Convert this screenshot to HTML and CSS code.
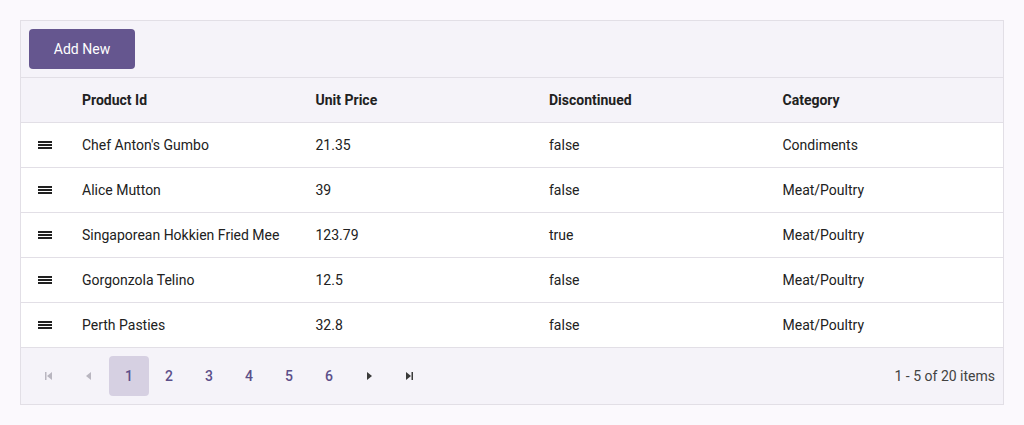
FILE: index.html
```html
<!DOCTYPE html>
<html>
<head>
<meta charset="utf-8">
<link rel="stylesheet" href="styles.css">
</head>
<body>
<div class="grid">
  <div class="toolbar"><button class="btn-add">Add New</button></div>
  <table class="tbl">
    <colgroup><col class="c-drag"><col><col><col><col></colgroup>
    <thead>
      <tr><th></th><th>Product Id</th><th>Unit Price</th><th>Discontinued</th><th>Category</th></tr>
    </thead>
    <tbody>
      <tr><td class="drag"><svg width="14" height="8" viewBox="0 0 14 8"><rect x="0" y="0" width="14" height="2" fill="#212121"/><rect x="0" y="3" width="14" height="2" fill="#212121"/><rect x="0" y="6" width="14" height="2" fill="#212121"/></svg></td><td>Chef Anton's Gumbo</td><td>21.35</td><td>false</td><td>Condiments</td></tr>
      <tr><td class="drag"><svg width="14" height="8" viewBox="0 0 14 8"><rect x="0" y="0" width="14" height="2" fill="#212121"/><rect x="0" y="3" width="14" height="2" fill="#212121"/><rect x="0" y="6" width="14" height="2" fill="#212121"/></svg></td><td>Alice Mutton</td><td>39</td><td>false</td><td>Meat/Poultry</td></tr>
      <tr><td class="drag"><svg width="14" height="8" viewBox="0 0 14 8"><rect x="0" y="0" width="14" height="2" fill="#212121"/><rect x="0" y="3" width="14" height="2" fill="#212121"/><rect x="0" y="6" width="14" height="2" fill="#212121"/></svg></td><td>Singaporean Hokkien Fried Mee</td><td>123.79</td><td>true</td><td>Meat/Poultry</td></tr>
      <tr><td class="drag"><svg width="14" height="8" viewBox="0 0 14 8"><rect x="0" y="0" width="14" height="2" fill="#212121"/><rect x="0" y="3" width="14" height="2" fill="#212121"/><rect x="0" y="6" width="14" height="2" fill="#212121"/></svg></td><td>Gorgonzola Telino</td><td>12.5</td><td>false</td><td>Meat/Poultry</td></tr>
      <tr><td class="drag"><svg width="14" height="8" viewBox="0 0 14 8"><rect x="0" y="0" width="14" height="2" fill="#212121"/><rect x="0" y="3" width="14" height="2" fill="#212121"/><rect x="0" y="6" width="14" height="2" fill="#212121"/></svg></td><td>Perth Pasties</td><td>32.8</td><td>false</td><td>Meat/Poultry</td></tr>
    </tbody>
  </table>
  <div class="pager">
    <div class="pages">
      <span class="pbtn dis"><svg width="8" height="8" viewBox="0 0 8 8"><rect x="0" y="0" width="1.5" height="8" fill="currentColor"/><path d="M7 0 L2 4 L7 8 Z" fill="currentColor"/></svg></span>
      <span class="pbtn dis"><svg width="8" height="8" viewBox="0 0 8 8"><path d="M6 0 L1 4 L6 8 Z" fill="currentColor"/></svg></span>
      <span class="pbtn num sel">1</span>
      <span class="pbtn num">2</span>
      <span class="pbtn num">3</span>
      <span class="pbtn num">4</span>
      <span class="pbtn num">5</span>
      <span class="pbtn num">6</span>
      <span class="pbtn nav"><svg width="8" height="8" viewBox="0 0 8 8"><path d="M2 0 L7 4 L2 8 Z" fill="currentColor"/></svg></span>
      <span class="pbtn nav"><svg width="8" height="8" viewBox="0 0 8 8"><path d="M1 0 L6 4 L1 8 Z" fill="currentColor"/><rect x="6.5" y="0" width="1.5" height="8" fill="currentColor"/></svg></span>
    </div>
    <div class="info">1 - 5 of 20 items</div>
  </div>
</div>
</body>
</html>
```

FILE: styles.css
```css
html, body { margin: 0; padding: 0; }
body {
  background: #fbf9fd;
  font-family: Roboto, "Liberation Sans", sans-serif;
  font-size: 14px;
  color: #212121;
  padding: 20px 20px 0 20px;
}
.grid {
  width: 982px;
  border: 1px solid #e2dfe6;
  background: #f5f3f9;
}
.toolbar {
  padding: 8px;
  height: 40px;
  border-bottom: 1px solid #e2dfe6;
}
.btn-add {
  width: 106px;
  height: 40px;
  border: none;
  border-radius: 4px;
  background: #65568f;
  color: #ffffff;
  font-family: Roboto, "Liberation Sans", sans-serif;
  font-size: 14px;
  font-weight: 400;
  padding: 0;
}
.tbl {
  width: 100%;
  border-collapse: collapse;
  table-layout: fixed;
}
.c-drag { width: 48px; }
.tbl th {
  text-align: left;
  font-weight: 700;
  height: 44px;
  padding: 0 13px;
  border-bottom: 1px solid #e2dfe6;
  background: #f5f3f9;
}
.tbl td {
  height: 44px;
  padding: 0 13px;
  background: #ffffff;
  border-bottom: 1px solid #e2dfe6;
}
.tbl td.drag {
  padding: 0 0 0 17px;
  line-height: 0;
}
.tbl td.drag svg { display: block; }
.pager {
  display: flex;
  align-items: center;
  justify-content: space-between;
  padding: 8px;
  height: 40px;
}
.pages { display: flex; }
.pbtn {
  width: 40px;
  height: 40px;
  display: flex;
  align-items: center;
  justify-content: center;
  border-radius: 4px;
}
.pbtn.dis { color: #b9b6c0; }
.pbtn.nav { color: #3a3a3a; }
.pbtn.num { color: #5c4f8a; font-size: 14px; font-weight: 500; }
.pbtn.sel { background: #d6d0e2; }
.info { color: #424242; padding-right: 0; }
```
